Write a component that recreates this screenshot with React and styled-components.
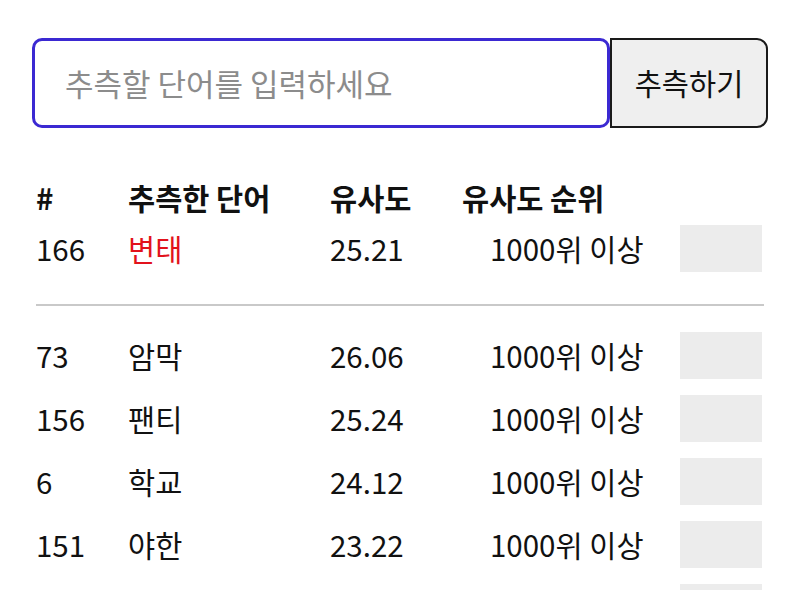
import React from 'react';
import styled, { createGlobalStyle } from 'styled-components';

const GlobalStyle = createGlobalStyle`
  html, body {
    margin: 0;
    padding: 0;
    background: #fff;
  }
  body {
    font-family: "Noto Sans CJK KR", "Noto Sans", sans-serif;
    color: #111;
  }
`;

const Page = styled.div`
  padding: 38px 32px 0;
  height: 590px;
  box-sizing: border-box;
  overflow: hidden;
`;

const GuessForm = styled.form`
  display: flex;
  height: 90px;
`;

const GuessInput = styled.input`
  flex: 1;
  min-width: 0;
  box-sizing: border-box;
  height: 100%;
  border: 3px solid #3b29d2;
  border-radius: 10px;
  padding: 0 0 2px 30px;
  font-family: inherit;
  font-size: 31px;
  color: #111;
  outline: none;
  &::placeholder {
    color: #8c8c8c;
  }
`;

const GuessButton = styled.button`
  width: 158px;
  box-sizing: border-box;
  height: 100%;
  background: #efefef;
  border: 2px solid #1a1a1a;
  border-radius: 0 11px 11px 0;
  font-family: inherit;
  font-size: 29.5px;
  color: #111;
  padding: 0 0 2px;
`;

const Table = styled.div`
  margin-top: 50px;
  display: flex;
  flex-direction: column;
`;

const Row = styled.div`
  display: grid;
  grid-template-columns: 92px 202px 132px 218px 82px;
  align-items: center;
  padding-left: 4px;
  height: ${({ head }) => (head ? '40px' : '47px')};
  margin-top: ${({ gap }) => gap || 0}px;
  font-size: 29.5px;
  font-weight: ${({ head }) => (head ? 700 : 400)};
  line-height: 1;
`;

const Cell = styled.div`
  white-space: nowrap;
  color: ${({ hot }) => (hot ? '#e2121c' : 'inherit')};
`;

const RankCell = styled.div`
  white-space: nowrap;
  padding-left: 28px;
`;

const ProgressBox = styled.div`
  height: 47px;
  background: #ececec;
`;

const Divider = styled.hr`
  margin: 32px 4px 26px;
  border: none;
  height: 2px;
  background: #c9c9c9;
`;

const latest = { n: 166, word: '변태', sim: '25.21' };

const guesses = [
  { n: 73, word: '암막', sim: '26.06' },
  { n: 156, word: '팬티', sim: '25.24' },
  { n: 6, word: '학교', sim: '24.12' },
  { n: 151, word: '야한', sim: '23.22' },
];

const GuessRow = ({ n, word, sim, hot, gap }) => (
  <Row gap={gap}>
    <Cell>{n}</Cell>
    <Cell hot={hot}>{word}</Cell>
    <Cell>{sim}</Cell>
    <RankCell>1000위 이상</RankCell>
    <ProgressBox />
  </Row>
);

export default function App() {
  return (
    <>
      <GlobalStyle />
      <Page>
        <GuessForm onSubmit={(e) => e.preventDefault()}>
          <GuessInput placeholder="추측할 단어를 입력하세요" />
          <GuessButton type="submit">추측하기</GuessButton>
        </GuessForm>
        <Table>
          <Row head>
            <Cell>#</Cell>
            <Cell>추측한 단어</Cell>
            <Cell>유사도</Cell>
            <Cell>유사도 순위</Cell>
            <div />
          </Row>
          <GuessRow {...latest} hot gap={7} />
          <Divider />
          {guesses.map((g, i) => (
            <GuessRow key={g.n} {...g} gap={i === 0 ? 0 : 16} />
          ))}
          {/* next row starts at the bottom edge of the window */}
          <Row gap={16}>
            <div />
            <div />
            <div />
            <div />
            <ProgressBox />
          </Row>
        </Table>
      </Page>
    </>
  );
}
